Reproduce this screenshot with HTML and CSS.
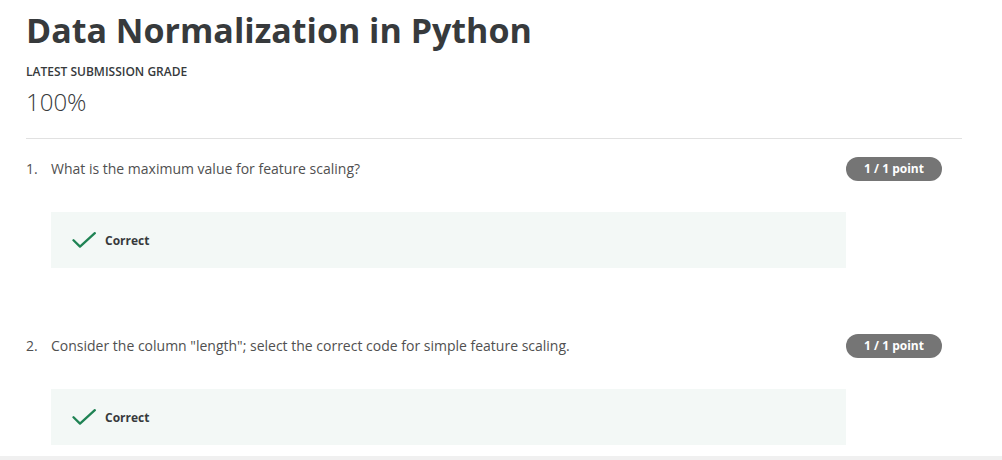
FILE: index.html
```html
<!DOCTYPE html>
<html lang="en">
<head>
<meta charset="utf-8">
<title>Data Normalization in Python</title>
<link rel="stylesheet" href="styles.css">
</head>
<body>
<main class="page">
  <h1 class="title">Data Normalization in Python</h1>
  <div class="grade-label">LATEST SUBMISSION GRADE</div>
  <div class="grade-value">100%</div>
  <hr class="divider">

  <section class="question">
    <div class="q-num">1.</div>
    <div class="q-text">What is the maximum value for feature scaling?</div>
    <div class="badge">1 / 1 point</div>
    <div class="feedback">
      <svg class="check" width="24" height="16" viewBox="0 0 24 16" aria-hidden="true">
        <path d="M1.5 8.2 L8 14.6 L22.8 1.2" fill="none" stroke="#1f8354" stroke-width="2.3" stroke-linecap="round" stroke-linejoin="round"/>
      </svg>
      <span class="feedback-text">Correct</span>
    </div>
  </section>

  <section class="question">
    <div class="q-num">2.</div>
    <div class="q-text">Consider the column "length"; select the correct code for simple feature scaling.</div>
    <div class="badge">1 / 1 point</div>
    <div class="feedback">
      <svg class="check" width="24" height="16" viewBox="0 0 24 16" aria-hidden="true">
        <path d="M1.5 8.2 L8 14.6 L22.8 1.2" fill="none" stroke="#1f8354" stroke-width="2.3" stroke-linecap="round" stroke-linejoin="round"/>
      </svg>
      <span class="feedback-text">Correct</span>
    </div>
  </section>
</main>
<div class="footer-band"></div>
</body>
</html>
```
FILE: styles.css
```css
html, body {
  margin: 0;
  padding: 0;
  background: #ffffff;
  font-family: "Open Sans", "Noto Sans", sans-serif;
  color: #373a3c;
}

.page {
  width: 936px;
  padding: 6px 0 0 26px;
}

.title {
  margin: 0;
  font-size: 34px;
  line-height: 48px;
  font-weight: 700;
  color: #373a3c;
}

.grade-label {
  margin-top: 10px;
  font-size: 12px;
  line-height: 16px;
  font-weight: 600;
  color: #373a3c;
}

.grade-value {
  margin-top: 6px;
  font-size: 24px;
  line-height: 32px;
  font-weight: 300;
  color: #373a3c;
}

.divider {
  margin: 20px 0 0 0;
  border: 0;
  height: 1px;
  background: #e1e1e1;
}

.question {
  display: grid;
  grid-template-columns: 25px 795px 96px;
  grid-template-rows: 24px 56px;
  row-gap: 31px;
  align-items: center;
  margin-top: 18px;
}

.question + .question {
  margin-top: 66px;
}

.q-num,
.q-text {
  font-size: 14px;
  line-height: 20px;
  color: #505050;
}

.badge {
  height: 24px;
  border-radius: 12px;
  background: #757575;
  color: #ffffff;
  font-size: 12px;
  font-weight: 700;
  line-height: 24px;
  text-align: center;
}

.feedback {
  grid-column: 2;
  height: 56px;
  background: #f3f8f6;
  display: flex;
  align-items: center;
  padding-left: 21px;
  gap: 9px;
}

.check {
  display: block;
}

.feedback-text {
  font-size: 12px;
  font-weight: 700;
  color: #373a3c;
}

.footer-band {
  margin-top: 11px;
  height: 4px;
  background: #f0f0f0;
}
```
